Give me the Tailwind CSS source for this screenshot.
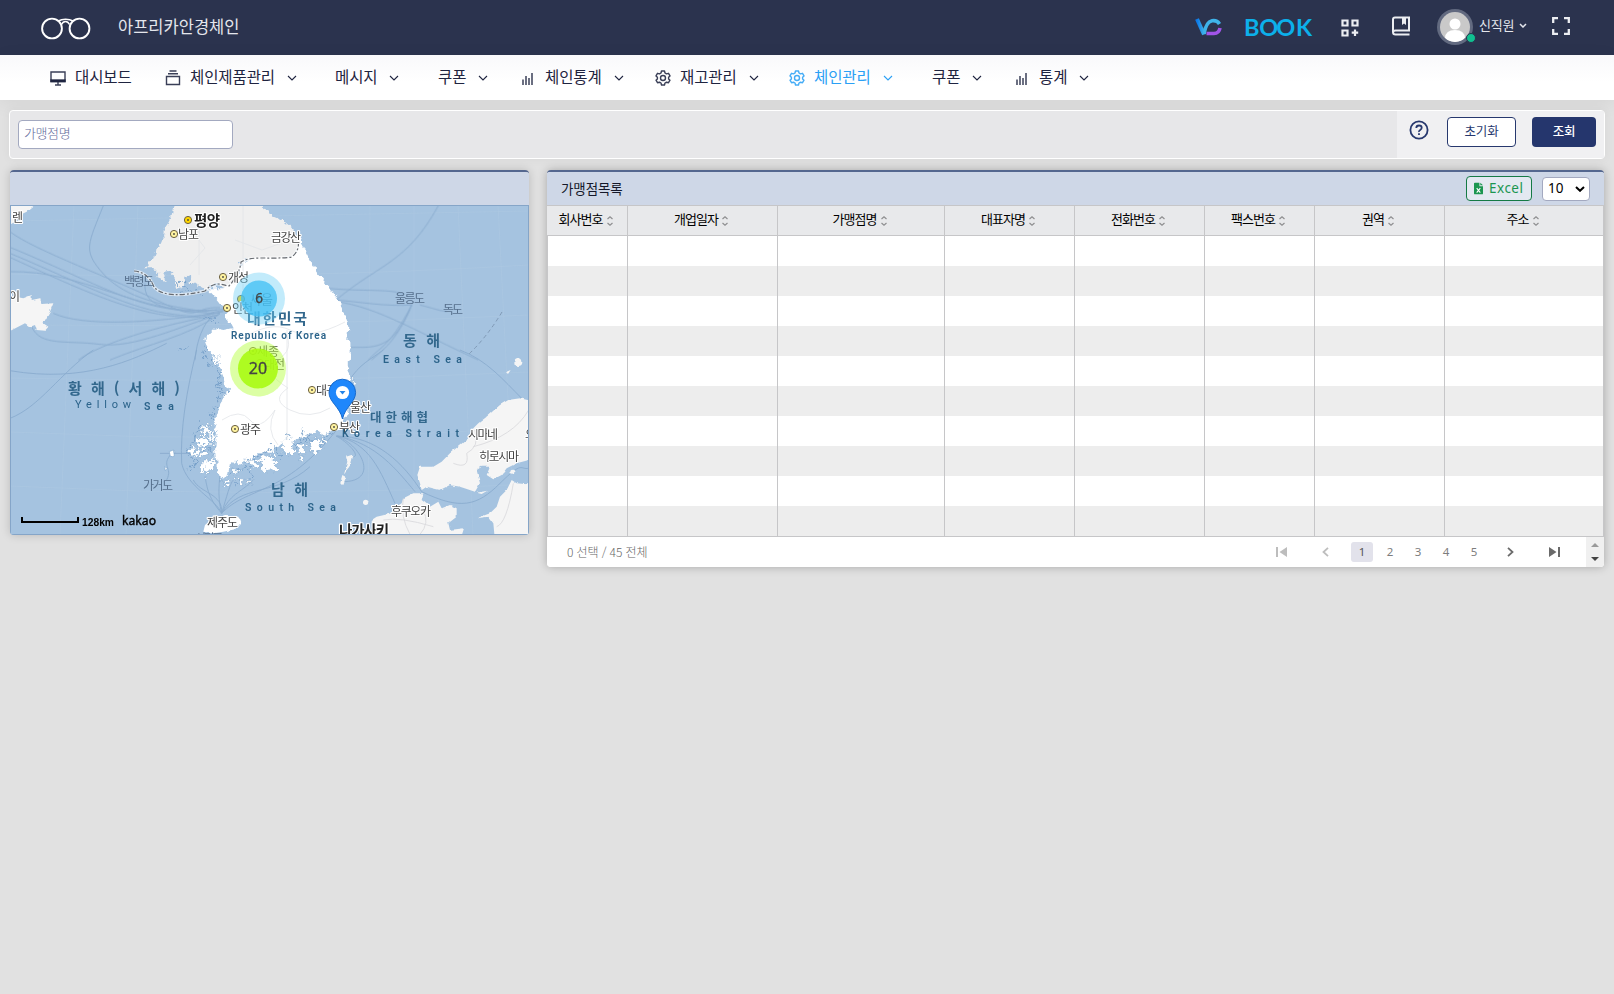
<!DOCTYPE html>
<html lang="ko">
<head>
<meta charset="utf-8">
<title>가맹점목록</title>
<script src="https://cdn.jsdelivr.net/npm/@tailwindcss/browser@4"></script>
</head>
<body class="h-screen overflow-hidden bg-[#e1e1e1] font-['Noto_Sans_CJK_KR',sans-serif] text-[#1f2440]">
<header class="flex h-[55px] items-center bg-[#2b334e] pl-[40px] text-[#e4e6ec]">
  <svg class="h-[26px] w-[52px] shrink-0" viewBox="0 0 52 26" fill="none" stroke="#fff" stroke-width="1.900"><circle cx="12" cy="13.500" r="9.900"/><circle cx="39.500" cy="13.500" r="9.900"/><path d="M18.500 6C22 3.800 29 3.800 33 6M21.500 9.500C23.500 5.500 27.500 5.500 29.500 9.500" stroke-width="1.500"/></svg>
  <h1 class="-mt-[3px] ml-[26px] w-[1077px] text-[16.5px] font-normal tracking-[0px] whitespace-nowrap">아프리카안경체인</h1>
  <svg class="h-[19px] w-[27px] shrink-0" viewBox="0 0 27 19" fill="none" stroke-width="3.600"><defs><linearGradient id="vc"><stop offset="0" stop-color="#0b78e8"/><stop offset="1" stop-color="#3fb4ea"/></linearGradient></defs><path d="M9 16Q11 4 17 2.800Q22 2 24.500 6" stroke="#3fb4ea"/><path d="M2 1L9 16.500" stroke="url(#vc)" stroke-width="4"/><path d="M11.500 15.500H19Q24 15.500 25 10" stroke="#a154e8"/></svg>
  <svg class="ml-[22px] h-[30px] w-[70px] shrink-0" viewBox="0 -4 70 30"><text x="0 15.200 32.200 52" y="19" font-family="Lato" font-weight="700" font-size="23.500" fill="#0cb0ea">BOOK</text></svg>
  <svg class="ml-[27px] h-[18px] w-[18px] shrink-0" viewBox="0 0 18 18" fill="none" stroke="#eceef2" stroke-width="2.200"><path d="M1.500 1.500h5v5h-5zM11.500 1.500h5v5h-5zM1.500 11.500h5v5h-5zM14 10.500v6.500M10.700 13.700h6.500"/></svg>
  <svg class="-mt-[3px] ml-[33px] h-[20px] w-[18px] shrink-0" viewBox="0 0 18 20" fill="none" stroke="#eceef2" stroke-width="2"><path d="M17.500 18.500H3.500Q1 18.500 1 16V3.500Q1 1.500 3 1.500H17V14.500H3.500Q1 14.500 1 16.500"/><path d="M10 2h4v7l-2-1.500L10 9z" fill="#eceef2" stroke="none"/></svg>
  <div class="relative -mt-[2px] ml-[27px] h-[36px] w-[36px] shrink-0 rounded-full bg-[#626a80] p-[3px]">
    <svg class="h-[30px] w-[30px] rounded-full bg-[#c9c9c9]" viewBox="0 0 30 30" fill="#fff"><circle cx="15" cy="12" r="5.500"/><path d="M5 26Q5.500 18 15 18T25 26L20 30H10z"/></svg>
    <span class="absolute right-[-3px] bottom-[2px] h-[10px] w-[10px] rounded-full border border-[#2b334e] bg-[#10c090]"></span>
  </div>
  <span class="-mt-[5px] ml-[6px] w-[37px] text-[13px] tracking-[-0.2px] whitespace-nowrap">신직원</span>
  <svg class="-mt-[4px] ml-[3px] h-[5px] w-[8px] shrink-0" viewBox="0 0 8 5" fill="none" stroke="#e4e6ec" stroke-width="1.500"><path d="M1 1l3 3 3-3"/></svg>
  <svg class="-mt-[3px] ml-[25px] h-[18px] w-[18px] shrink-0" viewBox="0 0 18 18" fill="none" stroke="#eceef2" stroke-width="2.300"><path d="M1.200 6V1.200H6M12 1.200h4.800V6M16.800 12v4.800H12M6 16.800H1.200V12"/></svg>
</header>
<nav id="menu" class="grid h-[45px] grid-cols-[115px_163px_103px_89px_135px_134px_136px_89px_100px] items-center bg-gradient-to-b from-[#f9f9fb] to-white to-60% pl-[50px] text-[15.5px] tracking-[-0.1px] whitespace-nowrap shadow-[0_4px_20px_rgba(0,0,0,0.06)]"></nav>

<section class="mx-[9px] mt-[10px] flex h-[49px] justify-between rounded-[4px] border border-white bg-[#e7e7e9] pl-[8px] shadow-[0_0_10px_rgba(0,0,0,0.05)]">
  <div class="mt-[9px] flex h-[29px] w-[215px] items-center rounded-[4px] border border-[#a3a9c0] bg-white pb-[4px] pl-[5px] text-[13px] font-light tracking-[-0.4px] text-[#5f6b9a]">가맹점명</div>
  <div class="flex w-[207px] bg-[#f0f0f2]">
    <svg class="mt-[9px] ml-[12px] h-[20px] w-[20px]" viewBox="0 0 20 20" fill="none" stroke="#27386e" stroke-width="1.800"><circle cx="10" cy="10" r="8.600"/><path d="M7.300 8Q7.300 5.500 10 5.500T12.700 7.800Q12.700 9 11.200 9.900T10 12"/><path d="M10 13.300v1.800"/></svg>
    <div class="mt-[6px] ml-[18px] flex h-[30px] w-[69px] items-center justify-center rounded-[4px] border border-[#27386e] bg-white pb-[2px] text-[12.5px] tracking-[-0.2px] text-[#27386e]">초기화</div>
    <div class="mt-[6px] ml-[16px] flex h-[30px] w-[64px] items-center justify-center rounded-[4px] bg-[#25366d] pb-[2px] text-[12.5px] font-medium tracking-[-0.2px] text-white">조회</div>
  </div>
</section>

<main class="mt-[11px] flex items-start gap-[18px] pl-[10px]">
  <section class="w-[519px] overflow-hidden rounded-[4px] border-t-2 border-[#54678f] shadow-[0_0_10px_rgba(0,0,0,0.18)]">
    <div class="h-[33px] bg-[#ced7e7]"></div>
    <svg class="block h-[330px] w-[519px]" viewBox="10 205 519 330">
      <defs><filter id="coast" x="0" y="0" width="1" height="1"><feTurbulence type="fractalNoise" baseFrequency=".17" numOctaves="3" seed="4"/><feDisplacementMap in="SourceGraphic" scale="7" xChannelSelector="R" yChannelSelector="G"/></filter>
      <filter id="ragged" x="0" y="0" width="1" height="1"><feTurbulence type="fractalNoise" baseFrequency=".22" numOctaves="3" seed="11"/><feDisplacementMap in="SourceGraphic" scale="14" xChannelSelector="R" yChannelSelector="G"/></filter>
      <filter id="soft" x="0" y="0" width="1" height="1"><feTurbulence type="fractalNoise" baseFrequency=".16" numOctaves="2" seed="8"/><feDisplacementMap in="SourceGraphic" scale="3" xChannelSelector="R" yChannelSelector="G"/></filter></defs>
      <rect x="10" y="205" width="519" height="330" fill="#a5c3e0"/>
      <g fill="none" stroke="#b0cae3" stroke-width="1" opacity=".45"><path d="M74 205L60 535M138 205L126 535M458 205L473 535M414 205L414 535M370 205L368 535M498 205L515 535M10 221L529 211M10 274Q280 280 529 265M10 325Q270 328 529 315M10 378Q270 385 529 372M10 432Q270 445 529 428M10 486Q270 500 529 484"/></g>
      <!-- sea routes -->
      <g fill="none" stroke="#84a7cb" stroke-width="2.600" opacity=".85">
        <g transform="translate(0 160) scale(.33333)"><path d="M310 137C265 250 250 270 300 330S420 430 620 455M30 215C100 270 350 360 480 425S570 440 660 443M30 262C200 330 370 425 500 445S610 450 670 448M30 280C200 350 370 440 500 460S610 456 670 452M30 292C200 370 370 450 500 466S610 462 670 455M30 335C250 330 400 460 660 460M160 460C250 500 450 490 660 458M95 500C120 560 200 540 300 553S540 500 660 462M235 600C300 550 500 490 655 465M330 600C450 550 560 530 655 465M435 370C430 440 500 455 650 450M585 600C590 540 610 490 640 465"/></g>
        <g transform="translate(260 160) scale(.33333)"><path d="M535 137C440 310 360 310 228 420M205 385C300 395 410 385 430 405M225 420C300 425 370 440 455 435M230 425C350 440 480 520 655 600M455 435C390 560 360 560 325 600M455 435C400 580 330 560 270 562M455 435C410 540 380 560 335 600M480 435C520 445 530 450 560 455"/></g>
        <g transform="translate(0 350) scale(.33333)"><path d="M30 62C250 100 400 30 500 -20M30 205C120 170 180 70 280 0M590 0C560 120 540 240 545 340C560 410 650 450 665 490M480 310H580M665 490C670 430 600 430 580 390M665 490C690 430 720 430 760 390M665 490C720 400 830 440 930 350M665 490C620 440 620 400 615 380M665 490C650 430 660 390 660 370M665 490C680 440 690 400 700 390M665 490C740 410 850 440 1010 240M500 390C520 350 480 350 515 310"/></g>
        <g transform="translate(260 350) scale(.33333)"><path d="M230 258C330 280 360 360 405 460M232 258C350 280 410 360 465 425M232 258C350 260 430 340 485 425M228 258C300 280 360 390 255 395M228 258C270 280 300 320 280 320M485 425C600 480 650 470 720 400S780 360 806 355M600 0C680 30 730 90 785 145M265 95C300 40 330 30 370 0"/></g>
      </g>
      <path d="M502 312Q487 337 468 355" fill="none" stroke="#7f98b4" stroke-dasharray="4 3"/>
      <g filter="url(#coast)">
        <path transform="translate(0 160) scale(.33333)" fill="#efefef" d="M525 120L515 165 505 185 495 200 493 225 483 250 468 275 458 300 435 325 465 325 478 338 470 355 500 367 490 340 515 335 525 365 528 390 548 382 553 350 575 345 565 370 590 375 612 388 650 372 680 388 710 370 720 310 740 295 810 297 855 294 880 287 900 250 895 230 885 215 845 180 815 168 772 120z"/>
        <path transform="translate(170 200) scale(.33333)" fill="#fff" d="M110 265L130 285 150 310 172 330 165 345 185 385 160 390 135 385 120 400 105 415 115 440 130 475 148 500 160 530 165 550 180 570 160 590 150 620 140 650 130 680 140 710 135 750 140 795 150 830 170 835 175 800 200 780 210 795 225 775 235 790 260 760 300 760 330 730 350 740 375 720 425 700 445 695 460 708 485 695 510 690 520 665 532 640 535 600 530 565 542 530 532 510 540 480 538 430 532 420 535 380 525 350 510 310 485 270 455 235 425 190 400 135 387 110 385 140 370 167 345 174 240 175 215 185 200 245 160 265z"/>
      </g>
      <!-- archipelago along the west and south coasts -->
      <g filter="url(#ragged)"><g transform="translate(170 200) scale(.33333)">
        <path fill="none" stroke="#6d99c4" stroke-width="3.500" opacity=".8" d="M110 440L100 470 120 500M130 480L150 520 140 560 165 580 140 600M140 620L120 640 135 660M90 670L70 720 50 750 80 790 60 810M110 690L100 740 130 760M180 825L230 800 250 830M220 790L265 770 310 740 330 770M350 700L370 740 410 710M400 690L440 740 480 700M195 860L215 840M50 440L30 450M90 365L120 350 140 370M15 250L50 270 100 285M30 245L60 240"/>
        <path fill="#fff" stroke="#6d99c4" stroke-width="1.500" d="M95 680L115 675 122 700 100 712zM78 715L108 708 112 735 85 745zM62 748L80 745 85 765 65 772zM95 785L125 775 140 795 118 820 98 815zM90 750L108 745 115 765 96 768zM120 700L135 690 135 735 120 735zM132 462L152 485 140 497zM158 840L180 835 175 858 160 855zM200 838L220 840 212 856zM185 812L205 812 196 828zM237 785L258 778 262 800 244 802zM272 775L302 762 325 790 315 812 280 815 268 800zM340 715L370 715 368 760 340 762zM378 735L402 725 405 745 385 758zM415 725L450 720 452 752 425 760zM385 768L402 764 394 780zM455 705L472 712 460 725zM235 838L245 845 238 856zM540 540L557 532 552 556z"/>
      </g></g>
      <g filter="url(#soft)">
        <g transform="translate(0 160) scale(.33333)" fill="#f5f5f5"><path d="M20 405L70 415 95 405 95 420 120 415 125 432 160 430 150 455 130 490 145 500 135 512 110 510 105 495 90 500 75 490 20 518zM20 200L45 185 60 165 80 155 110 130H20z"/></g>
        <g transform="translate(260 350) scale(.33333)" fill="#f5f5f5"><path d="M826 155L780 145 745 150 720 165 700 182 680 200 655 220 640 235 625 265 600 285 570 310 545 335 520 350 480 350 472 375 480 400 485 420 500 410 540 420 570 405 600 410 645 425 660 400 650 360 665 350 690 350 680 375 700 388 725 375 740 355 770 340 826 325zM395 490L350 500 335 510 345 573H600L612 535 570 540 565 520 590 500 590 475 570 465 545 475 535 455 510 470 485 450 490 430 460 430 430 445 425 460 400 475zM826 405L770 400 755 390 740 420 720 440 710 470 690 490 650 505 685 500 700 520 705 573H826zM650 428L682 422 665 432zM738 66L752 60 744 72zM258 320L277 314 268 350 252 370 262 335zM247 375L259 382 250 405 240 400z"/><circle cx="775" cy="36" r="12"/><circle cx="317" cy="457" r="8"/><circle cx="757" cy="365" r="6"/></g>
        <path transform="translate(0 350) scale(.33333)" fill="#fff" d="M610 545L615 525 640 505 680 498 715 500 722 520 705 538 670 545 640 550z"/>
        <g transform="translate(0 350) scale(.33333)" fill="#fff" stroke="#6d99c4" stroke-width="1.500"><path d="M508 305L520 300 523 318 512 322zM494 350L502 355 496 362z"/></g>
      </g>
      <g fill="none" stroke="#e2e4e9" stroke-width=".8"><path d="M199 275V210M243 290V205M185 222L205 248 190 265M235 240L262 250 290 240M287 330V440M240 340Q270 320 290 330T345 322M285 332Q295 350 277 360T288 388Q270 400 290 410T330 408M222 420Q240 408 250 420T275 410Q265 430 278 445"/><g transform="translate(260 350) scale(.33333)" stroke="#d9d9dc" stroke-width="2.500"><path d="M645 240Q660 290 620 310 630 360 580 340M640 290Q760 260 806 180M760 400Q740 520 710 530M430 445Q420 500 450 553M490 480Q510 520 480 553M370 510Q420 500 520 530"/></g></g>
      <path d="M134 271Q148 272 154 287Q165 300 205 291C215 280 222 285 229 286Q240 273 241 262C252 255 270 260 292 257Q300 250 298 241" fill="none" stroke="#fff" stroke-width="3" opacity=".6"/>
      <path d="M134 271Q148 272 154 287Q165 300 205 291C215 280 222 285 229 286Q240 273 241 262C252 255 270 260 292 257Q300 250 298 241" fill="none" stroke="#666a70" stroke-width="1.200" stroke-dasharray="5 2 2 2"/>
      <!-- city markers -->
      <g fill="#fff3a0" stroke="#6b6040" stroke-width="1"><circle cx="188" cy="220" r="3.600" fill="#ffd600"/><circle cx="174" cy="234" r="3.600"/><circle cx="223" cy="277" r="3.600"/><circle cx="241" cy="299" r="3.600" fill="#ffd600"/><circle cx="227" cy="308" r="3.600"/><circle cx="253" cy="351" r="3.600"/><circle cx="260" cy="363" r="3.600"/><circle cx="312" cy="390" r="3.600"/><circle cx="235" cy="429" r="3.600"/><circle cx="334" cy="427" r="3.600"/></g>
      <g fill="#444"><circle cx="188" cy="220" r=".9"/><circle cx="174" cy="234" r=".9"/><circle cx="223" cy="277" r=".9"/><circle cx="227" cy="308" r=".9"/><circle cx="253" cy="351" r=".9"/><circle cx="312" cy="390" r=".9"/><circle cx="235" cy="429" r=".9"/><circle cx="334" cy="427" r=".9"/></g>
      <g font-family="Noto Sans CJK KR" font-size="12" fill="#444" stroke="#fff" stroke-width="2.200" paint-order="stroke" stroke-linejoin="round">
        <text x="194" y="225.500" font-size="14.500" font-weight="700" fill="#222" textLength="26">평양</text>
        <text x="178" y="239" textLength="21">남포</text><text x="271" y="241.500" textLength="30">금강산</text>
        <text x="228" y="282" textLength="21">개성</text><text x="249" y="304" font-size="13" textLength="24">서울</text><text x="232" y="313" textLength="21">인천</text>
        <text x="257" y="356" textLength="22">세종</text><text x="264" y="369" textLength="21">대전</text><text x="316" y="395" textLength="21">대구</text>
        <text x="350" y="412" textLength="21">울산</text><text x="339" y="432" textLength="21">부산</text><text x="240" y="434" textLength="21">광주</text>
        <text x="207" y="527" textLength="31">제주도</text><text x="12" y="222" textLength="10">렌</text><text x="9" y="300.500" textLength="10">이</text>
        <text x="468" y="438.500" textLength="30">시마네</text><text x="479" y="460.500" textLength="40">히로시마</text><text x="391" y="515.500" textLength="40">후쿠오카</text><text x="525" y="438.500">오카</text>
        <text x="339" y="535.500" font-size="14.500" font-weight="700" fill="#222" textLength="50">나가사키</text>
      </g>
      <g font-family="Noto Sans CJK KR" font-size="12" fill="#566f8c"><text x="124" y="285.500" textLength="30">백령도</text><text x="395" y="302.500" textLength="30">울릉도</text><text x="443" y="313.500" textLength="20">독도</text><text x="143" y="490" textLength="30">가거도</text><text x="195" y="543" textLength="28">서귀포</text></g>
      <g font-family="Noto Sans CJK KR" font-weight="700" fill="#33688d">
        <text x="247" y="324" font-size="15" textLength="60">대한민국</text><text x="403" y="346" font-size="15" textLength="37">동 해</text><text x="68" y="393.500" font-size="15" textLength="112">황 해 ( 서 해 )</text><text x="370" y="421.500" font-size="12.500" textLength="58">대한해협</text><text x="271" y="495" font-size="15" textLength="37">남 해</text>
      </g>
      <g font-family="Roboto" font-weight="600" font-size="10" fill="#2b638a">
        <text x="231" y="338.500" textLength="95">Republic of Korea</text><text x="383" y="362.500" font-size="10.500" textLength="79">East Sea</text><text x="75" y="408" font-size="11" font-weight="400" textLength="56">Yellow</text><text x="144" y="410" font-size="10.500" textLength="30">Sea</text><text x="342" y="436.500" font-size="10.500" textLength="117">Korea Strait</text><text x="245" y="511" font-size="10.500" textLength="91">South Sea</text>
      </g>
      <!-- store clusters -->
      <circle cx="259" cy="298.500" r="26" fill="#6dcff6" opacity=".42"/><circle cx="259" cy="298.500" r="18" fill="#42c0f5" opacity=".78"/>
      <text x="259" y="302.500" text-anchor="middle" font-family="Noto Sans" font-size="13.500" fill="#444" stroke="#444" stroke-width=".3">6</text>
      <circle cx="258" cy="368.500" r="28" fill="#baff4a" opacity=".5"/><circle cx="258" cy="368.500" r="20" fill="#a8fb10" opacity=".88"/>
      <text x="258" y="373.500" text-anchor="middle" font-family="Noto Sans" font-size="16" fill="#444" stroke="#444" stroke-width=".3">20</text>
      <path d="M342.500 419C340 407 329 402 329 392.500A13.300 13.300 0 0 1 355.600 392.500C355.600 402 345 407 342.500 419z" fill="#1f87fb" stroke="#1669cc"/>
      <circle cx="342.500" cy="392.500" r="6.600" fill="#fff"/><path d="M339.500 391h6l-3 3.500z" fill="#2484e8"/>
      <path d="M22 517v5H78v-5" fill="none" stroke="#000" stroke-width="2"/>
      <text x="82" y="526" font-family="Liberation Sans" font-size="10" font-weight="700" textLength="32" lengthAdjust="spacingAndGlyphs">128km</text>
      <text x="122" y="525" font-family="Noto Sans" font-size="12.500" stroke="#000" stroke-width=".4" textLength="34" lengthAdjust="spacingAndGlyphs">kakao</text>
      <rect x="10.500" y="205.500" width="518" height="329" fill="none" stroke="#85a5c8"/>
    </svg>
  </section>

  <section class="w-[1057px] overflow-hidden rounded-[4px] border-t-2 border-[#54678f] bg-white shadow-[0_0_10px_rgba(0,0,0,0.26)]">
    <div class="flex h-[33px] items-center bg-[#ced7e7] pr-[14px] pl-[14px]">
      <h2 class="flex-1 text-[13.5px] tracking-[-0.1px] text-[#15182a]">가맹점목록</h2>
      <div class="flex h-[25px] w-[66px] items-center gap-[6px] rounded-[4px] border border-[#157a45] bg-[#e3e9f1] pl-[7px] font-['Noto_Sans'] text-[13.5px] tracking-[0.5px] text-[#1b9650]">
        <svg class="h-[13px] w-[9px] shrink-0" viewBox="0 0 10 13"><path d="M1 0h5v4h4v8q0 1-1 1H1q-1 0-1-1V1q0-1 1-1zM7 0l3 3H7z" fill="#1b9650"/><path d="M3 6l4 5M7 6l-4 5" stroke="#fff" stroke-width="1.200"/></svg>Excel</div>
      <div class="ml-[10px] flex h-[24px] w-[48px] items-center justify-between rounded-[4px] border border-[#a3a9c0] bg-white pr-[4px] pl-[5px] font-['Noto_Sans'] text-[13.5px] text-black">10<svg class="h-[6px] w-[10px]" viewBox="0 0 10 6" fill="none" stroke="#000" stroke-width="2"><path d="M1 1l4 3.800L9 1"/></svg></div>
    </div>
    <div id="head" class="grid h-[31px] grid-cols-[81px_150px_167px_130px_130px_110px_130px_159px] border-y border-[#c6c6c8] bg-[#e8e9eb] text-[13px] tracking-[-0.9px] text-black"></div>
    <div id="rows" class="border-l border-[#c6c6c8]"></div>
    <footer class="flex h-[31px] border-t border-[#c6c6c8] bg-white text-[12px] text-[#7d7d7d]">
      <div class="flex flex-1 items-center pl-[20px] text-[12px] font-light tracking-[-0.1px] text-[#666]">0 선택 / 45 전체</div>
      <div class="flex items-center font-['Noto_Sans'] text-[11.5px]">
        <svg class="h-[10px] w-[11px]" viewBox="0 0 11 10" fill="#bdbdbd"><path d="M0 0h2v10H0zM11 0v10L3.500 5z"/></svg>
        <svg class="ml-[35px] h-[10px] w-[7px]" viewBox="0 0 7 10" fill="none" stroke="#bdbdbd" stroke-width="1.800"><path d="M6 .8L1.500 5 6 9.200"/></svg>
        <span class="ml-[22px] flex h-[20px] w-[22px] items-center justify-center rounded-[3px] bg-[#e2e2eb] text-[#555]">1</span>
        <span class="ml-[3px] w-[28px] text-center">2</span><span class="w-[28px] text-center">3</span><span class="w-[28px] text-center">4</span><span class="w-[28px] text-center">5</span>
        <svg class="ml-[19px] h-[10px] w-[7px]" viewBox="0 0 7 10" fill="none" stroke="#6a6a6a" stroke-width="1.800"><path d="M1 .8L5.500 5 1 9.200"/></svg>
        <svg class="ml-[35px] h-[10px] w-[11px]" viewBox="0 0 11 10" fill="#6a6a6a"><path d="M9 0h2v10H9zM0 0v10L7.500 5z"/></svg>
      </div>
      <div class="ml-[26px] flex w-[18px] flex-col items-center justify-center gap-[10px] bg-[#f0f0f0]"><svg class="h-[4px] w-[8px]" viewBox="0 0 8 4" fill="#9a9a9a"><path d="M0 4l4-4 4 4z"/></svg><svg class="h-[4px] w-[8px]" viewBox="0 0 8 4" fill="#444"><path d="M0 0l4 4 4-4z"/></svg></div>
    </footer>
  </section>
</main>
<script>
const icons = {
  monitor: '<path d="M1 2h14v9.500H1zM8 12v3M5 15h6" /><path d="M1 10h14v1.500H1z" fill="currentColor"/>',
  stack: '<path d="M1.500 6.500h13v8h-13zM3 3.800h10M4.500 1h7"/>',
  bars: '<path d="M3 15V9.500M6 15V6M9 15V8M12 15V3" stroke-width="1.500"/>',
  gear: '<path d="M6.500 1h3l.5 2 1.500.9 2-.6 1.500 2.600L13.600 7.300v1.600L15 10.200l-1.500 2.500-2-.5-1.500.8-.5 2h-3L6 13l-1.500-.8-2 .5L1 10.200 2.400 8.900V7.300L1 5.900l1.500-2.600 2 .6L6 3z" stroke-linejoin="round"/><circle cx="8" cy="8" r="2.500"/>'
};
const menu = [['monitor','대시보드'],['stack','체인제품관리'],['','메시지'],['','쿠폰'],['bars','체인통계'],['gear','재고관리'],['gear','체인관리'],['','쿠폰'],['bars','통계']];
document.getElementById('menu').innerHTML = menu.map(([ic, t], i) =>
  `<a class="flex items-center ${i === 6 ? 'text-[#2ba0f5]' : ''}">` +
  (ic ? `<svg class="mr-[9px] h-[16px] w-[16px] shrink-0" viewBox="0 0 16 16" fill="none" stroke="currentColor" stroke-opacity=".88" stroke-width="1.400">${icons[ic]}</svg>` : '<span class="w-[7px]"></span>') +
  `<span class="-mt-[1px]">${t}</span>` +
  (i ? '<svg class="ml-[12px] h-[6px] w-[10px] shrink-0" viewBox="0 0 10 6" fill="none" stroke="currentColor" stroke-width="1.100"><path d="M1 1l4 4 4-4"/></svg>' : '') + '</a>').join('');
document.getElementById('head').innerHTML = ['회사번호','개업일자','가맹점명','대표자명','전화번호','팩스번호','권역','주소'].map(t =>
  `<div class="flex items-center justify-center gap-[4px] border-r border-[#c6c6c8] pr-[3px] pb-[3px]">${t}<svg class="mt-[3px] h-[10px] w-[6px]" viewBox="0 0 6 10" fill="none" stroke="#8e8e90" stroke-width="1.200"><path d="M.5 3L3 .8 5.500 3M.5 7L3 9.200 5.500 7"/></svg></div>`).join('');
document.getElementById('rows').innerHTML = Array.from({length: 10}, () =>
  '<div class="grid h-[30px] grid-cols-[80px_150px_167px_130px_130px_110px_130px_159px] bg-white even:bg-[#ededed]">' + '<div class="border-r border-[#c6c6c8]"></div>'.repeat(8) + '</div>').join('');
</script>
</body>
</html>
